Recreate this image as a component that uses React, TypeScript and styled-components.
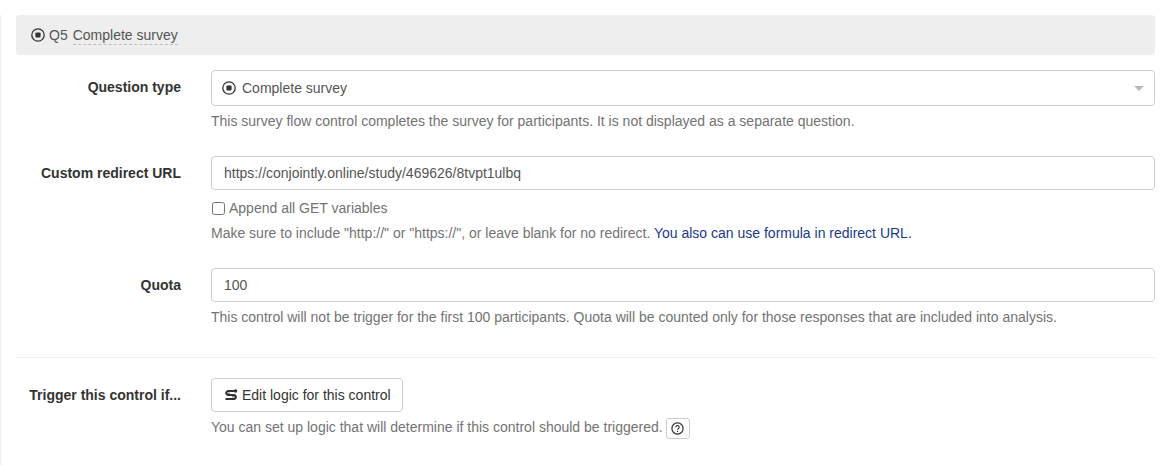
import { ReactElement, ReactNode } from 'react';
import styled, { createGlobalStyle } from 'styled-components';

const GlobalStyle = createGlobalStyle`
  html, body {
    margin: 0;
    padding: 0;
    background: #fff;
  }

  body {
    font-family: "Liberation Sans", Arial, sans-serif;
    font-size: 14px;
    line-height: 20px;
    color: #555;
  }
`;

const Page = styled.div`
  position: relative;
  width: 1168px;
  height: 465px;
  box-sizing: border-box;
  padding: 15px 13px 0 16px;
  overflow: hidden;

  /* thin edge of the surrounding panel */
  &::before {
    position: absolute;
    top: 15px;
    bottom: 0;
    left: 0;
    width: 1px;
    content: '';
    background: #eee;
  }
`;

const Header = styled.div`
  display: flex;
  align-items: center;
  height: 40px;
  padding-left: 15px;
  background: #eee;
  border-radius: 4px;
  color: #555;
`;

const QuestionName = styled.span`
  margin-left: 5px;
  margin-top: 1px;
  border-bottom: 1px dashed #bbb;
  line-height: 18px;
`;

const QuestionCode = styled.span`
  margin-left: 4px;
`;

const Row = styled.div<{ $top: number }>`
  display: grid;
  grid-template-columns: 165px 944px;
  column-gap: 30px;
  margin-top: ${props => props.$top}px;
`;

const Label = styled.div<{ $height: number }>`
  height: ${props => props.$height}px;
  display: flex;
  align-items: center;
  justify-content: flex-end;
  font-weight: bold;
  color: #333;
`;

const Field = styled.div<{ $height: number }>`
  display: flex;
  align-items: center;
  box-sizing: border-box;
  height: ${props => props.$height}px;
  padding: 0 12px;
  background: #fff;
  border: 1px solid #ccc;
  border-radius: 4px;
  color: #555;
`;

const SelectField = styled(Field)`
  padding-left: 10px;
`;

const SelectText = styled.span`
  flex: 1;
  margin-left: 6px;
`;

const Caret = styled.span`
  width: 0;
  height: 0;
  margin-right: -2px;
  border-left: 5px solid transparent;
  border-right: 5px solid transparent;
  border-top: 5px solid #bbb;
`;

const Help = styled.div<{ $top: number }>`
  margin-top: ${props => props.$top}px;
  color: #737373;
`;

const HelpLink = styled.span`
  color: #1b3a8c;
`;

const CheckLine = styled.label`
  display: flex;
  align-items: center;
  margin-top: 8px;
  color: #737373;
`;

const CheckBox = styled.span`
  box-sizing: border-box;
  width: 13px;
  height: 13px;
  margin: 0 4px 0 1px;
  border: 1px solid #767676;
  border-radius: 2.5px;
  background: #fff;
`;

const Divider = styled.div`
  height: 1px;
  margin: 30px 0 20px;
  background: #eee;
`;

const Button = styled.button`
  display: inline-flex;
  align-items: center;
  box-sizing: border-box;
  height: 34px;
  padding: 0 11px 0 12px;
  background: #fff;
  border: 1px solid #ccc;
  border-radius: 4px;
  font: inherit;
  color: #333;
`;

const ButtonText = styled.span`
  margin-left: 4px;
`;

const HelpButton = styled.span`
  display: inline-flex;
  align-items: center;
  justify-content: center;
  box-sizing: border-box;
  width: 24px;
  height: 21px;
  margin-left: 3px;
  vertical-align: middle;
  border: 1px solid #ccc;
  border-radius: 3px;
  color: #333;
`;

const IconSvg = styled.svg`
  flex-shrink: 0;
  display: block;
`;

/**
 * Radio style icon of the complete survey control
 */
function RadioIcon(): ReactElement {
  return (
    <IconSvg width="14" height="14" viewBox="0 0 14 14">
      <circle cx="7" cy="7" r="6.2" fill="none" stroke="#333" strokeWidth="1.3" />
      <rect x="4.4" y="4.4" width="5.2" height="5.2" rx="1" fill="#333" />
    </IconSvg>
  );
}

/**
 * Logic icon on the edit button
 */
function LogicIcon(): ReactElement {
  return (
    <IconSvg width="14" height="14" viewBox="0 0 14 14">
      <path
        d="M11 3H4.200a2 2 0 0 0 0 4h5.600a2 2 0 0 1 0 4H1.500"
        fill="none"
        stroke="#333"
        strokeWidth="1.800"
      />
      <path d="M1 5.200h5M8 8.800h5" stroke="#333" strokeWidth=".8" />
      <circle cx="11.500" cy="3" r="1.800" fill="#333" />
    </IconSvg>
  );
}

function QuestionIcon(): ReactElement {
  return (
    <IconSvg width="13" height="13" viewBox="0 0 13 13">
      <circle cx="6.500" cy="6.500" r="5.600" fill="none" stroke="#333" strokeWidth="1.200" />
      <path d="M4.800 5.200a1.700 1.700 0 1 1 2.600 1.400c-.6.400-.9.700-.9 1.200" fill="none" stroke="#333" strokeWidth="1.100" />
      <rect x="5.900" y="8.800" width="1.200" height="1.200" fill="#333" />
    </IconSvg>
  );
}

interface FormRowProps {
  label: string;
  labelHeight: number;
  top: number;
  children: ReactNode;
}

function FormRow(props: FormRowProps): ReactElement {
  return (
    <Row $top={props.top}>
      <Label $height={props.labelHeight}>{props.label}</Label>
      <div>{props.children}</div>
    </Row>
  );
}

function App(): ReactElement {
  return (
    <Page>
      <GlobalStyle />
      <Header>
        <RadioIcon />
        <QuestionCode>Q5</QuestionCode>
        <QuestionName>Complete survey</QuestionName>
      </Header>

      <FormRow label="Question type" labelHeight={34} top={15}>
        <SelectField $height={36}>
          <RadioIcon />
          <SelectText>Complete survey</SelectText>
          <Caret />
        </SelectField>
        <Help $top={5}>This survey flow control completes the survey for participants. It is not displayed as a separate question.</Help>
      </FormRow>

      <FormRow label="Custom redirect URL" labelHeight={34} top={25}>
        <Field $height={34}>https://conjointly.online/study/469626/8tvpt1ulbq</Field>
        <CheckLine>
          <CheckBox />
          Append all GET variables
        </CheckLine>
        <Help $top={5}>
          Make sure to include "http://" or "https://", or leave blank for no redirect. <HelpLink>You also can use formula in redirect URL.</HelpLink>
        </Help>
      </FormRow>

      <FormRow label="Quota" labelHeight={34} top={25}>
        <Field $height={34}>100</Field>
        <Help $top={5}>This control will not be trigger for the first 100 participants. Quota will be counted only for those responses that are included into analysis.</Help>
      </FormRow>

      <Divider />

      <FormRow label="Trigger this control if..." labelHeight={34} top={0}>
        <Button>
          <LogicIcon />
          <ButtonText>Edit logic for this control</ButtonText>
        </Button>
        <Help $top={5}>
          You can set up logic that will determine if this control should be triggered.
          <HelpButton><QuestionIcon /></HelpButton>
        </Help>
      </FormRow>
    </Page>
  );
}

export default App;
